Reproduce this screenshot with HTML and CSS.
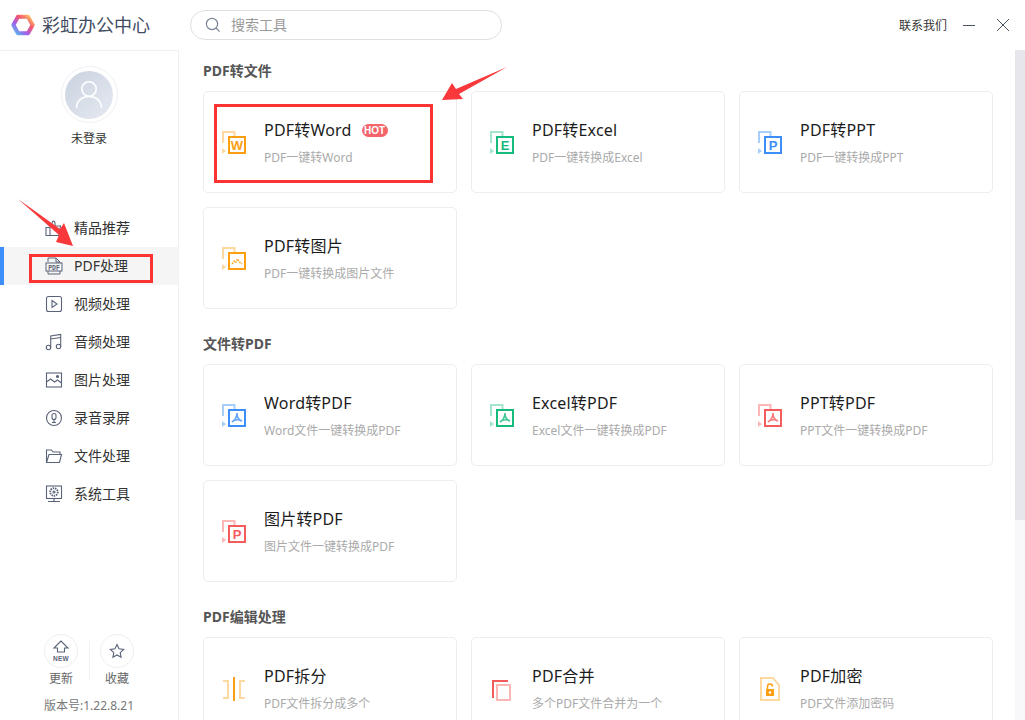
FILE: index.html
```html
<!DOCTYPE html>
<html lang="zh-CN">
<head>
<meta charset="utf-8">
<title>彩虹办公中心</title>
<link rel="stylesheet" href="styles.css">
</head>
<body>
<div class="app">
  <header class="topbar">
    <div class="brand">
      <svg class="logo" width="24" height="22" viewBox="0 0 26 24">
        <defs>
          <linearGradient id="lg" x1="0" y1="1" x2="1" y2="0">
            <stop offset="0" stop-color="#4fc3ee"/>
            <stop offset=".35" stop-color="#a45ee8"/>
            <stop offset=".65" stop-color="#f4566a"/>
            <stop offset="1" stop-color="#fdd267"/>
          </linearGradient>
        </defs>
        <path d="M7.500 3h11l5 9-5 9h-11l-5-9z" fill="none" stroke="url(#lg)" stroke-width="4.400" stroke-linejoin="round"/>
      </svg>
      <span class="brand-name">彩虹办公中心</span>
    </div>
    <div class="search">
      <svg width="16" height="16" viewBox="0 0 16 16" fill="none" stroke="#7c8696" stroke-width="1.200"><circle cx="7" cy="7" r="5.600"/><path d="M11 11l3.600 3.600"/></svg>
      <span class="search-text">搜索工具</span>
    </div>
    <div class="win">
      <span class="contact">联系我们</span>
      <svg width="12" height="12" viewBox="0 0 12 12" stroke="#4a5364" stroke-width="1"><path d="M0 6.500h12"/></svg>
      <svg class="close" width="12" height="12" viewBox="0 0 12 12" stroke="#4a5364" stroke-width="1" fill="none"><path d="M0 0l12 12M12 0L0 12"/></svg>
    </div>
  </header>
  <div class="body">
    <aside class="sidebar">
      <div class="user">
        <div class="avatar-ring">
          <div class="avatar">
            <svg width="28" height="30" viewBox="0 0 28 30" fill="none" stroke="#fff" stroke-width="1.600"><circle cx="14" cy="9" r="7.200"/><path d="M1.500 28c0-7 5.500-11.500 12.500-11.500S26.500 21 26.500 28"/></svg>
          </div>
        </div>
        <div class="user-name">未登录</div>
      </div>
      <nav class="nav">
        <div class="nav-item">
          <svg width="18" height="18" viewBox="0 0 18 18" fill="none" stroke="#5a6478" stroke-width="1.100"><path d="M1 8.500h4v8H1zM5 8.500l3-6.500c1.500 0 2 1 2 2.500V7h5.500l-1.500 9.500H5"/></svg>
          <span>精品推荐</span>
        </div>
        <div class="nav-item active">
          <svg width="18" height="18" viewBox="0 0 18 18" fill="none" stroke="#5a6478" stroke-width="1"><path d="M3 5V1h8l4 4v1M3 14v3h12v-3M11 1v4h4"/><rect x="1" y="6" width="16" height="8"/><text x="9" y="12.500" font-size="6.500" font-family="Liberation Mono" text-anchor="middle" fill="#5a6478" stroke="none" font-weight="700">PDF</text></svg>
          <span>PDF处理</span>
        </div>
        <div class="nav-item">
          <svg width="18" height="18" viewBox="0 0 18 18" fill="none" stroke="#5a6478" stroke-width="1.100"><rect x="1.500" y="1.500" width="15" height="15" rx="2"/><path d="M7 5.500l5 3.500-5 3.500z"/></svg>
          <span>视频处理</span>
        </div>
        <div class="nav-item">
          <svg width="18" height="18" viewBox="0 0 18 18" fill="none" stroke="#5a6478" stroke-width="1.100"><circle cx="3.500" cy="14.500" r="2.200"/><circle cx="13.500" cy="13.500" r="2.200"/><path d="M5.700 14.500V3l10-1.500v12M5.700 6l10-1.500"/></svg>
          <span>音频处理</span>
        </div>
        <div class="nav-item">
          <svg width="18" height="18" viewBox="0 0 18 18" fill="none" stroke="#5a6478" stroke-width="1.100"><rect x="1.500" y="2" width="15" height="14"/><path d="M1.500 11l4-3 4 3 3-2 4 3"/><circle cx="12.500" cy="5.500" r="1" fill="#5a6478"/></svg>
          <span>图片处理</span>
        </div>
        <div class="nav-item">
          <svg width="18" height="18" viewBox="0 0 18 18" fill="none" stroke="#5a6478" stroke-width="1.100"><circle cx="9" cy="9" r="7.500"/><rect x="7" y="4.500" width="4" height="6" rx="2"/><path d="M9 10.500v3M7 13.500h4"/></svg>
          <span>录音录屏</span>
        </div>
        <div class="nav-item">
          <svg width="18" height="18" viewBox="0 0 18 18" fill="none" stroke="#5a6478" stroke-width="1.100"><path d="M1.500 15.500V3h5l1.500 2h7v2M1.500 15.500L4 7.500h12.500l-2 8z"/></svg>
          <span>文件处理</span>
        </div>
        <div class="nav-item">
          <svg width="18" height="18" viewBox="0 0 18 18" fill="none" stroke="#5a6478" stroke-width="1.100"><rect x="1.500" y="1" width="15" height="12.500"/><circle cx="9" cy="7" r="3.800" stroke-dasharray="1.500 .8" stroke-width="1.800"/><circle cx="9" cy="7" r="1"/><path d="M9 13.500v3M3 16.500h12"/></svg>
          <span>系统工具</span>
        </div>
      </nav>
      <div class="side-foot">
        <div class="foot-btns">
          <div class="foot-btn">
            <div class="foot-circle">
              <svg width="18" height="22" viewBox="0 0 18 22" fill="none" stroke="#5a6478" stroke-width="1.100"><path d="M9 1L2 8h3.500v4h7V8H16z"/><text x="9" y="20.500" font-size="6.500" font-weight="700" font-family="Liberation Sans" letter-spacing=".3" text-anchor="middle" fill="#5a6478" stroke="none">NEW</text></svg>
            </div>
            <span>更新</span>
          </div>
          <div class="foot-div"></div>
          <div class="foot-btn">
            <div class="foot-circle">
              <svg width="16" height="16" viewBox="0 0 16 16" fill="none" stroke="#5a6478" stroke-width="1.100"><path d="M8 1.500l2 4.300 4.700.6-3.500 3.200.9 4.700L8 12l-4.100 2.300.9-4.700L1.300 6.400 6 5.800z"/></svg>
            </div>
            <span>收藏</span>
          </div>
        </div>
        <div class="version">版本号:1.22.8.21</div>
      </div>
    </aside>
    <main class="main">
      <section class="group">
        <h2 class="group-title">PDF转文件</h2>
        <div class="cards">
          <div class="card">
            <svg class="ci orange" width="24" height="24" viewBox="0 0 24 24"><path class="back" d="M1 12V1h11.500v5"/><path class="tri" d="M0 17l4 3-4 3z"/><rect class="front" x="7" y="6" width="16" height="16" fill="#fff"/><text class="glyph" x="15" y="19">W</text></svg>
            <div class="ct"><div class="title">PDF转Word<span class="hot">HOT</span></div><div class="sub">PDF一键转Word</div></div>
          </div>
          <div class="card">
            <svg class="ci green" width="24" height="24" viewBox="0 0 24 24"><path class="back" d="M1 12V1h11.500v5"/><path class="tri" d="M0 17l4 3-4 3z"/><rect class="front" x="7" y="6" width="16" height="16" fill="#fff"/><text class="glyph" x="15" y="19">E</text></svg>
            <div class="ct"><div class="title">PDF转Excel</div><div class="sub">PDF一键转换成Excel</div></div>
          </div>
          <div class="card">
            <svg class="ci blue" width="24" height="24" viewBox="0 0 24 24"><path class="back" d="M1 12V1h11.500v5"/><path class="tri" d="M0 17l4 3-4 3z"/><rect class="front" x="7" y="6" width="16" height="16" fill="#fff"/><text class="glyph" x="15" y="19">P</text></svg>
            <div class="ct"><div class="title">PDF转PPT</div><div class="sub">PDF一键转换成PPT</div></div>
          </div>
          <div class="card">
            <svg class="ci orange" width="24" height="24" viewBox="0 0 24 24"><path class="back" d="M1 12V1h11.500v5"/><path class="tri" d="M0 17l4 3-4 3z"/><rect class="front" x="7" y="6" width="16" height="16" fill="#fff"/><path class="dash" d="M10 17l2.500-3 1.500 1 1.500-3 2 3 2.500 2"/></svg>
            <div class="ct"><div class="title">PDF转图片</div><div class="sub">PDF一键转换成图片文件</div></div>
          </div>
        </div>
      </section>
      <section class="group">
        <h2 class="group-title">文件转PDF</h2>
        <div class="cards">
          <div class="card">
            <svg class="ci blue" width="24" height="24" viewBox="0 0 24 24"><path class="back" d="M1 12V1h11.500v5"/><path class="tri" d="M0 17l4 3-4 3z"/><rect class="front" x="7" y="6" width="16" height="16" fill="#fff"/><path class="line" d="M15 9c0 4-2 7-5 9 3-3 6-3 10-1-3-1-5-4-5-8z"/></svg>
            <div class="ct"><div class="title">Word转PDF</div><div class="sub">Word文件一键转换成PDF</div></div>
          </div>
          <div class="card">
            <svg class="ci green" width="24" height="24" viewBox="0 0 24 24"><path class="back" d="M1 12V1h11.500v5"/><path class="tri" d="M0 17l4 3-4 3z"/><rect class="front" x="7" y="6" width="16" height="16" fill="#fff"/><path class="line" d="M15 9c0 4-2 7-5 9 3-3 6-3 10-1-3-1-5-4-5-8z"/></svg>
            <div class="ct"><div class="title">Excel转PDF</div><div class="sub">Excel文件一键转换成PDF</div></div>
          </div>
          <div class="card">
            <svg class="ci red" width="24" height="24" viewBox="0 0 24 24"><path class="back" d="M1 12V1h11.500v5"/><path class="tri" d="M0 17l4 3-4 3z"/><rect class="front" x="7" y="6" width="16" height="16" fill="#fff"/><path class="line" d="M15 9c0 4-2 7-5 9 3-3 6-3 10-1-3-1-5-4-5-8z"/></svg>
            <div class="ct"><div class="title">PPT转PDF</div><div class="sub">PPT文件一键转换成PDF</div></div>
          </div>
          <div class="card">
            <svg class="ci red" width="24" height="24" viewBox="0 0 24 24"><path class="back" d="M1 12V1h11.500v5"/><path class="tri" d="M0 17l4 3-4 3z"/><rect class="front" x="7" y="6" width="16" height="16" fill="#fff"/><text class="glyph" x="15" y="19">P</text></svg>
            <div class="ct"><div class="title">图片转PDF</div><div class="sub">图片文件一键转换成PDF</div></div>
          </div>
        </div>
      </section>
      <section class="group">
        <h2 class="group-title">PDF编辑处理</h2>
        <div class="cards">
          <div class="card">
            <svg class="ci orange" width="24" height="24" viewBox="0 0 24 24"><path class="back" d="M1 4h5v17H1M23 4h-5v17h5"/><path class="solid" d="M12 0v24"/></svg>
            <div class="ct"><div class="title">PDF拆分</div><div class="sub">PDF文件拆分成多个</div></div>
          </div>
          <div class="card">
            <svg class="ci red" width="24" height="24" viewBox="0 0 24 24"><path class="solid" d="M3 21V4h15"/><rect class="back" x="7" y="8" width="13" height="15"/></svg>
            <div class="ct"><div class="title">PDF合并</div><div class="sub">多个PDF文件合并为一个</div></div>
          </div>
          <div class="card">
            <svg class="ci orange" width="24" height="24" viewBox="0 0 24 24"><path class="back" d="M3 1h12l6 7v15H3z"/><path class="fill" d="M8 12h8v7H8z"/><path class="solid thin" d="M9.500 12V9.500a2.500 2.500 0 0 1 5 0"/><circle cx="12" cy="15.500" r="1.200" fill="#fff"/></svg>
            <div class="ct"><div class="title">PDF加密</div><div class="sub">PDF文件添加密码</div></div>
          </div>
        </div>
      </section>
    </main>
    <div class="scrollbar"><div class="thumb"></div></div>
  </div>
  <svg class="marks" width="1025" height="720" viewBox="0 0 1025 720">
    <rect class="mark-box" x="215.500" y="105.500" width="216" height="76"/>
    <rect class="mark-box" x="30.500" y="255.500" width="121" height="26"/>
    <path class="mark-arrow" d="M507 67L459 94 463 99 442 100 452 83 456 89z"/>
    <path class="mark-arrow" d="M18 199L59 235 56 242 73 246 64 223 60 229z"/>
  </svg>
</div>
</body>
</html>
```
FILE: styles.css
```css
* { box-sizing: border-box; }
html, body { margin: 0; padding: 0; height: 720px; overflow: hidden; background: #fff; }
body { font-family: "Noto Sans", "Noto Sans CJK SC", "Liberation Sans", sans-serif; color: #333; }
.app { position: relative; width: 1025px; height: 720px; display: flex; flex-direction: column; }

.topbar { height: 50px; flex: none; display: flex; align-items: center; }
.brand { width: 190px; flex: none; display: flex; align-items: center; padding-left: 11px; gap: 7px; }
.logo { flex: none; }
.brand-name { font-size: 18px; color: #3f4c62; line-height: 24px; padding-bottom: 1px; }
.search { width: 312px; height: 30px; border: 1px solid #dcdfe4; border-radius: 15px; display: flex; align-items: center; padding-left: 14px; gap: 10px; }
.search-text { font-size: 14px; color: #9a9a9a; padding-bottom: 2px; }
.win { margin-left: auto; display: flex; align-items: center; padding-right: 16px; gap: 16px; }
.contact { font-size: 12px; color: #333; }
.close { margin-left: 6px; }

.body { flex: 1; min-height: 0; display: flex; }
.sidebar { width: 179px; flex: none; border-top: 1px solid #f0f1f4; border-right: 1px solid #eff0f3; display: flex; flex-direction: column; }
.user { display: flex; flex-direction: column; align-items: center; padding-top: 15px; }
.avatar-ring { width: 57px; height: 57px; border: 1px solid #eef0f5; border-radius: 50%; display: flex; align-items: center; justify-content: center; }
.avatar { width: 48px; height: 48px; border-radius: 50%; background: linear-gradient(135deg, #c9d2e0, #e6eaf1); display: flex; align-items: center; justify-content: center; }
.user-name { font-size: 12px; line-height: 18px; margin-top: 7px; color: #333; }

.nav { margin-top: 61px; }
.nav-item { height: 38px; display: flex; align-items: center; padding-left: 45px; gap: 11px; font-size: 14px; color: #333; border-left: 0 solid #3d8ef8; }
.nav-item span { padding-bottom: 2px; }
.nav-item.active { background: #f5f5f5; border-left-width: 4px; padding-left: 41px; }

.side-foot { margin-top: auto; display: flex; flex-direction: column; align-items: center; padding-bottom: 5px; }
.foot-btns { display: flex; align-items: center; }
.foot-btn { width: 56px; display: flex; flex-direction: column; align-items: center; font-size: 12px; color: #666; line-height: 16px; gap: 3px; }
.foot-circle { width: 34px; height: 34px; border: 1px solid #eceef1; border-radius: 50%; display: flex; align-items: center; justify-content: center; }
.foot-div { width: 1px; height: 40px; background: #f1f2f4; margin: 0 -1px 0 0; }
.version { font-size: 12px; line-height: 18px; color: #777; margin-top: 10px; }

.main { flex: 1; min-width: 0; padding: 11px 22px 0 24px; overflow: hidden; }
.group { margin-bottom: 25px; }
.group-title { margin: 0 0 10px; height: 20px; line-height: 20px; font-size: 14px; font-weight: 700; color: #555; }
.cards { display: grid; grid-template-columns: repeat(3, 254px); gap: 14px; }
.card { height: 102px; border: 1px solid #eceded; border-radius: 5px; background: #fff; display: flex; align-items: center; padding: 2px 0 0 18px; gap: 18px; }
.ci { flex: none; }
.ct { min-width: 0; margin-top: -1px; }
.title { font-size: 16px; line-height: 24px; letter-spacing: .2px; color: #1c1c1c; display: flex; align-items: center; }
.sub { font-size: 12px; line-height: 18px; margin-top: 7px; color: #aaa; }
.hot { margin-left: 10px; width: 26px; height: 13px; border-radius: 7px; background: #f4646a; color: #fff; font-size: 10px; font-weight: 700; line-height: 13px; letter-spacing: 0; text-align: center; font-family: "Liberation Sans", sans-serif; }

.ci .back { fill: none; stroke-width: 2; }
.ci .front { stroke-width: 2; }
.ci .solid { fill: none; stroke-width: 2; }
.ci .solid.thin { stroke-width: 1.500; }
.ci .line { fill: none; stroke-width: 1.600; opacity: .8; }
.ci .dash { fill: none; stroke-width: 1.500; stroke-dasharray: 1.500 1; }
.ci .glyph { font-family: "Liberation Sans", sans-serif; font-size: 13px; font-weight: 700; text-anchor: middle; }
.orange .back { stroke: #fdd9a0; } .orange .tri { fill: #fdd9a0; } .orange .front, .orange .solid, .orange .dash { stroke: #fc9f12; } .orange .glyph { fill: #fc9f12; } .orange .fill { fill: #fc9f12; }
.green .back { stroke: #a3e6cb; } .green .tri { fill: #a3e6cb; } .green .front, .green .line { stroke: #14bb7d; } .green .glyph { fill: #14bb7d; }
.blue .back { stroke: #a8cefc; } .blue .tri { fill: #a8cefc; } .blue .front, .blue .line { stroke: #3d8ef8; } .blue .glyph { fill: #3d8ef8; }
.red .back { stroke: #fbb6b6; } .red .tri { fill: #fbb6b6; } .red .front, .red .line, .red .solid { stroke: #f25c5c; } .red .glyph { fill: #f25c5c; }

.scrollbar { width: 10px; flex: none; background: #f8f8fa; }
.thumb { height: 470px; background: #e6e6ec; }

.marks { position: absolute; left: 0; top: 0; pointer-events: none; }
.mark-box { fill: none; stroke: #fb3333; stroke-width: 3; }
.mark-arrow { fill: #f8383a; }
```
